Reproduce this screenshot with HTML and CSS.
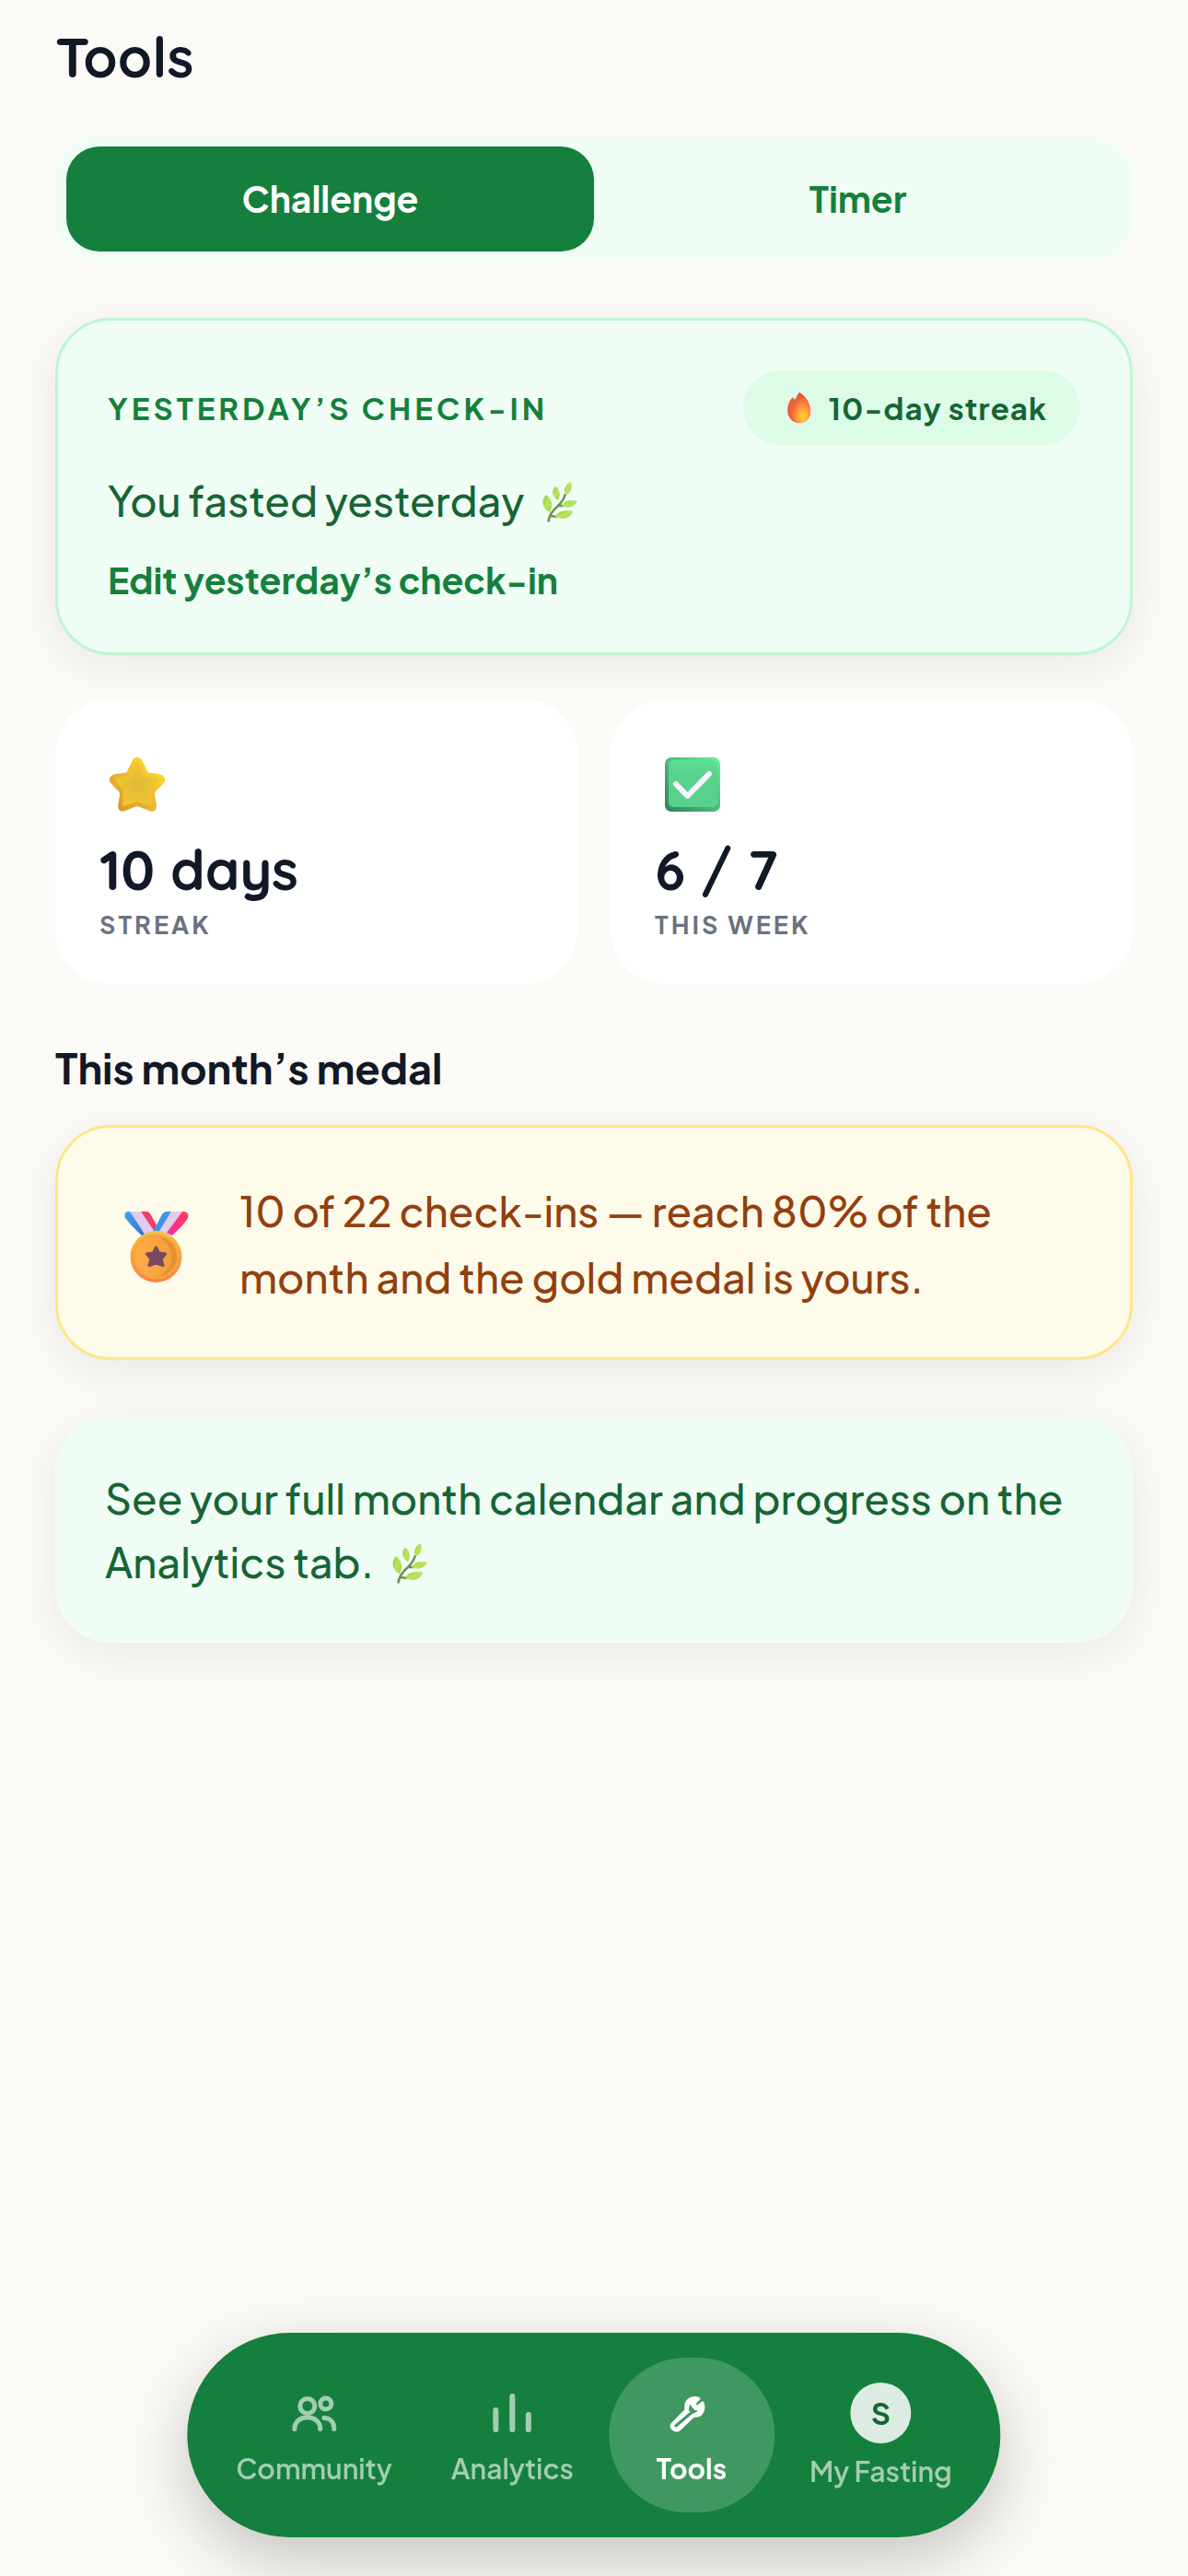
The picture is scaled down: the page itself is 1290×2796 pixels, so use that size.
FILE: index.html
```html
<!DOCTYPE html>
<html lang="en">
<head>
<meta charset="utf-8">
<meta name="viewport" content="width=device-width, initial-scale=1">
<title>Tools</title>
<link rel="stylesheet" href="styles.css">
</head>
<body>
<svg class="defs" width="0" height="0" aria-hidden="true">
  <defs>
    <linearGradient id="leafFill" x1="0" y1="0" x2="1" y2="1">
      <stop offset="0" stop-color="#8fcb3c"/><stop offset=".5" stop-color="#b9e65c"/><stop offset="1" stop-color="#a3cf55"/>
    </linearGradient>
    <symbol id="leaf" viewBox="0 0 38 44">
      <path d="M6.500 43.500C7 36 11 31 17 26C22 21 24 17 25 13M9 37l7 1M17 26h6" fill="none" stroke="#6f8f55" stroke-width="2.500"/>
      <path d="M31 0C26 2 22 8 25 14C30 13 33 7 31 0Z" fill="url(#leafFill)"/>
      <path d="M14 5C9 10 11 17 17 20C20 14 19 8 14 5Z" fill="url(#leafFill)"/>
      <path d="M4 14C-2 20 0 30 8 33C12 26 10 18 4 14Z" fill="url(#leafFill)"/>
      <path d="M21 26C24 19 31 20 38 20.500C36 26 28 30 21 26Z" fill="url(#leafFill)"/>
      <path d="M14 38C17 31 24 31 33 31.500C31 39 23 42 14 38Z" fill="url(#leafFill)"/>
    </symbol>
    <symbol id="flame" viewBox="0 0 25 33">
      <radialGradient id="flameFill" cx=".6" cy=".8" r=".8">
        <stop offset="0" stop-color="#ffd638"/><stop offset=".4" stop-color="#ff9a3c"/><stop offset="1" stop-color="#ee4038"/>
      </radialGradient>
      <path d="M6 5C0 10-1 20 1 25C4 31 8 33 13 33C20 33 25 28 25 20C25 12 20 4 13 0C10 3 10 5 8 8Z" fill="#e9643c"/>
      <path d="M13 0C20 4 25 12 25 20C25 28 20 33 14 33C8 33 4 28 5 21C6 15 13 8 13 0Z" fill="url(#flameFill)"/>
    </symbol>
  </defs>
</svg>

<main class="page">
  <h1 class="page-title">Tools</h1>

  <div class="tabs" role="tablist">
    <button class="tab tab-active" type="button" role="tab" aria-selected="true">Challenge</button>
    <button class="tab" type="button" role="tab" aria-selected="false">Timer</button>
  </div>

  <section class="card checkin">
    <div class="checkin-head">
      <h2 class="overline">Yesterday’s check-in</h2>
      <span class="streak-pill"><svg class="flame" aria-hidden="true"><use href="#flame"/></svg>10-day streak</span>
    </div>
    <p class="body-text">You fasted yesterday<svg class="leaf" aria-hidden="true"><use href="#leaf"/></svg></p>
    <a class="edit-link" href="#edit">Edit yesterday’s check-in</a>
  </section>

  <div class="stats">
    <section class="stat">
      <svg class="stat-icon" viewBox="0 0 60 60" aria-hidden="true">
        <defs>
          <linearGradient id="starEdge" x1="0" y1="1" x2="1" y2="0">
            <stop offset="0" stop-color="#cf9427"/><stop offset=".5" stop-color="#eebc30"/><stop offset="1" stop-color="#ffe52f"/>
          </linearGradient>
          <radialGradient id="starFace"><stop offset="0" stop-color="#dfbb38"/><stop offset="1" stop-color="#f1c233"/></radialGradient>
        </defs>
        <path d="M30 0C33 0 35 2 36 5L40 13C41 16 42 17 45 17L53 18C60 19 62 24 58 29L51 36C49 38 49 39 49 41L51 52C51 58 47 60 43 58L33 54C31 53 29 53 27 54L17 58C13 60 9 58 9 52L11 41C11 39 11 38 9 36L2 29C-2 24 0 19 7 18L15 17C18 17 19 16 20 13L24 5C25 2 27 0 30 0Z" fill="url(#starEdge)"/>
        <path d="M30 7L37 21L53 24L44 36L45 52L30 47L15 52L16 36L7 24L23 21Z" fill="url(#starFace)" stroke="#f1c233" stroke-width="2" stroke-linejoin="round"/>
      </svg>
      <strong class="stat-value">10 days</strong>
      <span class="stat-label">Streak</span>
    </section>
    <section class="stat">
      <svg class="stat-icon" viewBox="0 0 60 60" aria-hidden="true">
        <defs>
          <linearGradient id="boxEdge" x1="0" y1="1" x2="1" y2="0">
            <stop offset="0" stop-color="#357f5c"/><stop offset=".5" stop-color="#4cbb7e"/><stop offset="1" stop-color="#6bf09c"/>
          </linearGradient>
          <linearGradient id="boxFace" x1="0" y1="0" x2="0" y2="1"><stop offset="0" stop-color="#5fdf93"/><stop offset=".3" stop-color="#57d38b"/><stop offset="1" stop-color="#58d18c"/></linearGradient>
        </defs>
        <rect width="60" height="59" rx="7" fill="url(#boxEdge)"/>
        <rect x="4" y="3" width="53" height="51" rx="5" fill="url(#boxFace)"/>
        <path d="M12 29L24.500 42L48 18" fill="none" stroke="#faf0ff" stroke-width="6" stroke-linecap="round" stroke-linejoin="round"/>
      </svg>
      <strong class="stat-value">6 / 7</strong>
      <span class="stat-label">This week</span>
    </section>
  </div>

  <h2 class="section-title">This month’s medal</h2>
  <section class="card medal-card">
    <svg class="medal" viewBox="0 0 70 78" aria-hidden="true">
      <defs>
        <linearGradient id="medalRim" x1="0" y1="0" x2="0" y2="1"><stop offset="0" stop-color="#eec54c"/><stop offset=".5" stop-color="#f0a53c"/><stop offset="1" stop-color="#fb7f47"/></linearGradient>
        <linearGradient id="medalFace" x1="0" y1="0" x2="1" y2="0"><stop offset="0" stop-color="#ffad45"/><stop offset="1" stop-color="#f09c38"/></linearGradient>
        <linearGradient id="ribbonBlue" x1="0" y1="0" x2="1" y2="1"><stop offset="0" stop-color="#3fa4fa"/><stop offset="1" stop-color="#3a6fc9"/></linearGradient>
        <linearGradient id="ribbonRed" x1="0" y1="0" x2="0" y2="1"><stop offset="0" stop-color="#fb4150"/><stop offset="1" stop-color="#fb2aa0"/></linearGradient>
      </defs>
      <path d="M18 0H24Q27 0 29 4L35 15L32 24H27Z" fill="#ee3f66"/>
      <path d="M6 0H18L33 22L21 26Z" fill="#e0ccf1"/>
      <path d="M6 0L23 26H19C12 20 5 12 1 7Q-1 1 4 0Z" fill="url(#ribbonBlue)"/>
      <path d="M51 0H47Q43 0 41 3L31 22L36 25Z" fill="#3f92ea"/>
      <path d="M51 0H63L50 25H36Z" fill="#e0ccf1"/>
      <path d="M63 0H65Q71 1 69 7C65 14 58 20 52 26L46 23Z" fill="url(#ribbonRed)"/>
      <circle cx="34.500" cy="49" r="28" fill="url(#medalRim)"/>
      <circle cx="34.500" cy="49" r="23.500" fill="url(#medalFace)" stroke="#ffa23c" stroke-width="2"/>
      <path d="M36 28A21 21 0 0 1 36 70A22 22 0 0 0 36 28Z" fill="#e09232"/>
      <path d="M34.500 39L37.500 45L44.500 46L40 51.500L42 58.500L34.500 56L27 58.500L29 51.500L24.500 46L31.500 45Z" fill="#794760" stroke="#794760" stroke-width="3" stroke-linejoin="round"/>
    </svg>
    <p class="body-text">10 of 22 check-ins — reach 80% of the month and the gold medal is yours.</p>
  </section>

  <section class="card hint">
    <p class="body-text">See your full month calendar and progress on the Analytics tab.<svg class="leaf" aria-hidden="true"><use href="#leaf"/></svg></p>
  </section>
</main>

<nav class="nav" aria-label="Main">
  <a class="nav-item" href="#community">
    <svg class="nav-icon" viewBox="0 0 60 60" aria-hidden="true" fill="none" stroke="currentColor" stroke-width="5" stroke-linecap="round">
      <circle cx="22.500" cy="22.500" r="8"/><circle cx="42.500" cy="20" r="6"/>
      <path d="M8.500 47.500C8.500 30.500 36.500 30.500 36.500 47.500M40.500 35.500C47 35.500 51.500 40 51.500 47.500"/>
    </svg>
    Community
  </a>
  <a class="nav-item" href="#analytics">
    <svg class="nav-icon" viewBox="0 0 60 60" aria-hidden="true" fill="none" stroke="currentColor" stroke-width="6" stroke-linecap="round">
      <path d="M12 27V48M30 12V48M47.500 32V48"/>
    </svg>
    Analytics
  </a>
  <a class="nav-item nav-active" href="#tools" aria-current="page">
    <svg class="nav-icon" viewBox="0 0 60 60" aria-hidden="true">
      <path d="M39.300 14.700L34.300 20.300L36 21.500L41 17.300Q44 17 44 25Q43 35 32 35L18 48.500C15 51.500 11 51 8.500 48.500C6 46 5.500 43 8 40.500L22 26.500V22C22 16 28 12 33 12Q38 12 39.300 14.700Z" fill="currentColor"/>
      <path class="wrench-slot" d="M12.500 44L31 28.500" fill="none" stroke-width="3" stroke-linecap="round"/>
      <path class="wrench-gap" d="M27.500 20.500L33 27L37 27.500L32 30.500L26.500 27.500Z"/>
    </svg>
    Tools
  </a>
  <a class="nav-item" href="#my-fasting">
    <span class="avatar">S</span>
    My Fasting
  </a>
</nav>
</body>
</html>
```

FILE: styles.css
```css
:root {
  --green: #15803d;
  --green-dark: #166534;
  --green-tint: #f0fdf4;
  --ink: #111827;
  --active: #3f985f;
  --shadow: 0 12px 48px rgba(17, 24, 39, 0.08);
}

* {
  box-sizing: border-box;
}

body {
  margin: 0;
  min-height: 100vh;
  background: #fcfaf6;
  color: var(--ink);
  font-family: "Plus Jakarta Sans", Inter, "Liberation Sans", sans-serif;
}

h1,
h2,
p {
  margin: 0;
}

.defs {
  position: absolute;
}

.page {
  padding: 24px 60px 300px;
}

.page-title,
.stat-value {
  font-family: Quicksand, Inter, "Liberation Sans", sans-serif;
  font-size: 60px;
  line-height: 75px;
  font-weight: 700;
}

.tabs {
  display: grid;
  grid-template-columns: 1fr 1fr;
  margin-top: 48px;
  padding: 12px;
  border-radius: 48px;
  background: var(--green-tint);
}

.tab {
  height: 114px;
  padding: 0 0 1px;
  border: 0;
  border-radius: 36px;
  background: none;
  color: var(--green);
  font: inherit;
  font-size: 39px;
  font-weight: 700;
}

.tab-active {
  background: var(--green);
  color: #fff;
}

.card {
  border-radius: 60px;
  box-shadow: var(--shadow);
}

.checkin {
  margin-top: 60px;
  padding: 54px;
  border: 3px solid #bbf7d0;
  background: var(--green-tint);
}

.checkin-head {
  display: flex;
  align-items: center;
  justify-content: space-between;
}

.overline {
  color: var(--green);
  font-size: 33px;
  font-weight: 700;
  letter-spacing: 4px;
  text-transform: uppercase;
}

.streak-pill {
  display: flex;
  align-items: center;
  gap: 20px;
  padding: 0 36px 0 48px;
  border-radius: 42px;
  background: #dcfce7;
  color: var(--green-dark);
  font-size: 33px;
  font-weight: 700;
  letter-spacing: 1px;
  line-height: 81px;
}

.flame {
  width: 25px;
  height: 33px;
}

.body-text {
  font-size: 45px;
  font-weight: 500;
  line-height: 72px;
}

.checkin .body-text {
  margin-top: 24px;
  color: var(--green-dark);
}

.leaf {
  width: 38px;
  height: 44px;
  margin-left: 20px;
  vertical-align: -6px;
}

.edit-link {
  display: block;
  margin-top: 26px;
  color: var(--green);
  font-size: 39px;
  font-weight: 700;
  line-height: 49px;
  text-decoration: none;
}

.stats {
  display: grid;
  grid-template-columns: 1fr 1fr;
  gap: 36px;
  margin-top: 48px;
}

.stat {
  display: flex;
  flex-direction: column;
  padding: 63px 48px 42px;
  border-radius: 60px;
  background: #fff;
}

.stat-icon {
  width: 60px;
  height: 60px;
  margin: 0 0 24px 11px;
}

.stat-label {
  color: #6b7280;
  font-size: 27px;
  font-weight: 700;
  letter-spacing: 3px;
  line-height: 45px;
  text-transform: uppercase;
}

.section-title {
  margin-top: 59px;
  font-size: 45px;
  font-weight: 700;
  line-height: 63px;
}

.medal-card {
  display: flex;
  align-items: center;
  gap: 55px;
  margin-top: 31px;
  padding: 54px 72px 51px;
  border: 3px solid #fde68a;
  background: #fffbeb;
  color: #92400e;
}

.medal {
  flex: none;
  width: 70px;
  height: 78px;
  margin-top: 8px;
}

.hint {
  margin-top: 60px;
  padding: 55px 54px 54px;
  background: var(--green-tint);
  color: var(--green-dark);
}

.hint .body-text {
  line-height: 69px;
}

.nav {
  position: fixed;
  bottom: 42px;
  left: 50%;
  display: flex;
  gap: 12px;
  padding: 27px;
  border-radius: 111px;
  background: var(--green);
  box-shadow: 0 24px 72px rgba(0, 0, 0, 0.22);
  transform: translateX(-50%);
}

.nav-item {
  display: flex;
  flex-direction: column;
  align-items: center;
  justify-content: center;
  gap: 12px;
  min-width: 180px;
  height: 168px;
  padding: 0 26px;
  border-radius: 84px;
  color: #a2cdb1;
  font-size: 30px;
  font-weight: 600;
  line-height: 36px;
  text-decoration: none;
  white-space: nowrap;
}

.nav-active {
  background: var(--active);
  color: #fff;
  font-weight: 700;
}

.nav-icon {
  width: 60px;
  height: 60px;
}

.wrench-slot {
  stroke: var(--active);
}

.wrench-gap {
  fill: var(--active);
}

.avatar {
  width: 66px;
  border-radius: 50%;
  background: #dcece2;
  color: var(--green-dark);
  font-size: 33px;
  font-weight: 700;
  line-height: 66px;
  text-align: center;
}
```
